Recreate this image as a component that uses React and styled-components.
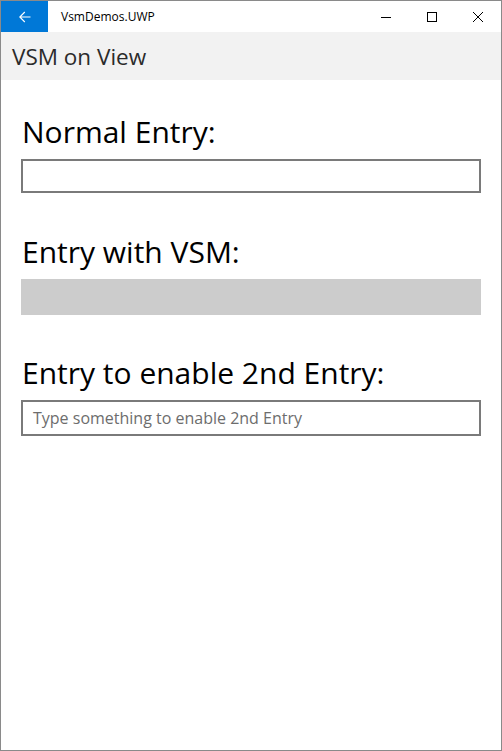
import React from 'react';
import styled, { createGlobalStyle } from 'styled-components';

const GlobalStyle = createGlobalStyle`
  html, body {
    margin: 0;
    padding: 0;
    background: #ffffff;
  }
  body {
    font-family: "Open Sans", "Noto Sans", sans-serif;
  }
`;

const Window = styled.div`
  box-sizing: border-box;
  width: 502px;
  height: 751px;
  border: 1px solid #8a8a8a;
  display: flex;
  flex-direction: column;
  background: #ffffff;
  overflow: hidden;
`;

const TitleBar = styled.div`
  display: flex;
  align-items: stretch;
  height: 31px;
  flex-shrink: 0;
`;

const BackButton = styled.div`
  width: 47px;
  flex-shrink: 0;
  background: #0078d7;
  display: flex;
  align-items: center;
  justify-content: center;
`;

const WindowTitle = styled.div`
  flex: 1;
  display: flex;
  align-items: center;
  padding-left: 13px;
  font-size: 12px;
  color: #000000;
`;

const CaptionButton = styled.div`
  width: 46px;
  flex-shrink: 0;
  display: flex;
  align-items: center;
  justify-content: center;
`;

const NavBar = styled.div`
  height: 48px;
  flex-shrink: 0;
  background: #f2f2f2;
  display: flex;
  align-items: center;
  padding-left: 11px;
  font-size: 22.5px;
  color: #2b2b2b;
`;

const Content = styled.div`
  display: flex;
  flex-direction: column;
  padding: 31px 20px 0 20px;
`;

const Section = styled.div`
  display: flex;
  flex-direction: column;
  margin-bottom: ${p => p.$gap || 0}px;
`;

const Label = styled.div`
  font-size: 30px;
  line-height: 42px;
  color: #000000;
  padding-left: 1px;
  margin-bottom: 6px;
`;

const EntryBox = styled.div`
  box-sizing: border-box;
  height: ${p => p.$h || 34}px;
  border: 2px solid ${p => (p.$disabled ? '#cccccc' : '#7a7a7a')};
  background: ${p => (p.$disabled ? '#cccccc' : '#ffffff')};
  display: flex;
  align-items: center;
  padding-left: 10px;
  font-size: 16px;
  color: #6d6d6d;
`;

export default function App() {
  return (
    <>
      <GlobalStyle />
      <Window>
        <TitleBar>
          <BackButton>
            <svg width="12" height="12" viewBox="0 0 12 12" fill="none" stroke="#ffffff" strokeWidth="1.1">
              <path d="M11.5 6H0.8M5.8 1L0.8 6l5 5" />
            </svg>
          </BackButton>
          <WindowTitle>VsmDemos.UWP</WindowTitle>
          <CaptionButton>
            <svg width="10" height="10" viewBox="0 0 10 10" fill="none" stroke="#000000" strokeWidth="1">
              <path d="M0 5.5h10" />
            </svg>
          </CaptionButton>
          <CaptionButton>
            <svg width="10" height="10" viewBox="0 0 10 10" fill="none" stroke="#000000" strokeWidth="1">
              <rect x="0.5" y="0.5" width="9" height="9" />
            </svg>
          </CaptionButton>
          <CaptionButton>
            <svg width="10" height="10" viewBox="0 0 10 10" fill="none" stroke="#000000" strokeWidth="1">
              <path d="M0 0l10 10M10 0L0 10" />
            </svg>
          </CaptionButton>
        </TitleBar>
        <NavBar>VSM on View</NavBar>
        <Content>
          <Section $gap={38}>
            <Label>Normal Entry:</Label>
            <EntryBox />
          </Section>
          <Section $gap={37}>
            <Label>Entry with VSM:</Label>
            <EntryBox $disabled $h={36} />
          </Section>
          <Section>
            <Label>Entry to enable 2nd Entry:</Label>
            <EntryBox $h={36}>Type something to enable 2nd Entry</EntryBox>
          </Section>
        </Content>
      </Window>
    </>
  );
}
